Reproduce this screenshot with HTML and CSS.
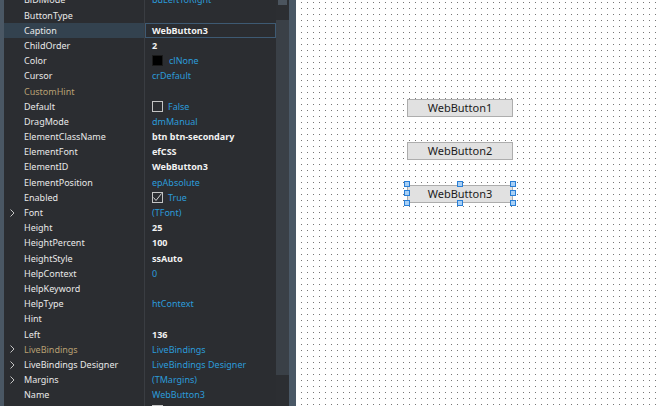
FILE: index.html
```html
<!DOCTYPE html>
<html>
<head>
<meta charset="utf-8">
<link rel="stylesheet" href="styles.css">
</head>
<body>
<div class="app">
  <div class="inspector">
    <div class="gutter"></div>
    <div class="props">
      <div class="row"><div class="name"><span class="slot"></span>BiDiMode</div><div class="val def">bdLeftToRight</div></div>
      <div class="row"><div class="name"><span class="slot"></span>ButtonType</div><div class="val"></div></div>
      <div class="row sel"><div class="name"><span class="slot"></span>Caption</div><div class="val mod">WebButton3</div></div>
      <div class="row"><div class="name"><span class="slot"></span>ChildOrder</div><div class="val mod">2</div></div>
      <div class="row"><div class="name"><span class="slot"></span>Color</div><div class="val def"><span class="swatch"></span>clNone</div></div>
      <div class="row"><div class="name"><span class="slot"></span>Cursor</div><div class="val def">crDefault</div></div>
      <div class="row"><div class="name tan"><span class="slot"></span>CustomHint</div><div class="val"></div></div>
      <div class="row"><div class="name"><span class="slot"></span>Default</div><div class="val def"><span class="check"></span>False</div></div>
      <div class="row"><div class="name"><span class="slot"></span>DragMode</div><div class="val def">dmManual</div></div>
      <div class="row"><div class="name"><span class="slot"></span>ElementClassName</div><div class="val mod">btn btn-secondary</div></div>
      <div class="row"><div class="name"><span class="slot"></span>ElementFont</div><div class="val mod">efCSS</div></div>
      <div class="row"><div class="name"><span class="slot"></span>ElementID</div><div class="val mod">WebButton3</div></div>
      <div class="row"><div class="name"><span class="slot"></span>ElementPosition</div><div class="val def">epAbsolute</div></div>
      <div class="row"><div class="name"><span class="slot"></span>Enabled</div><div class="val def"><span class="check"><svg width="11" height="11" viewBox="0 0 11 11"><polyline points="1.5,5.5 4,8.5 9.5,1.5" fill="none" stroke="#d0d0d0" stroke-width="1"/></svg></span>True</div></div>
      <div class="row"><div class="name"><span class="slot"><svg class="chev" width="5" height="8" viewBox="0 0 5 8"><polyline points="0.5,0.5 4,4 0.5,7.5" fill="none" stroke="#c4c4c4" stroke-width="1"/></svg></span>Font</div><div class="val def">(TFont)</div></div>
      <div class="row"><div class="name"><span class="slot"></span>Height</div><div class="val mod">25</div></div>
      <div class="row"><div class="name"><span class="slot"></span>HeightPercent</div><div class="val mod">100</div></div>
      <div class="row"><div class="name"><span class="slot"></span>HeightStyle</div><div class="val mod">ssAuto</div></div>
      <div class="row"><div class="name"><span class="slot"></span>HelpContext</div><div class="val def">0</div></div>
      <div class="row"><div class="name"><span class="slot"></span>HelpKeyword</div><div class="val"></div></div>
      <div class="row"><div class="name"><span class="slot"></span>HelpType</div><div class="val def">htContext</div></div>
      <div class="row"><div class="name"><span class="slot"></span>Hint</div><div class="val"></div></div>
      <div class="row"><div class="name"><span class="slot"></span>Left</div><div class="val mod">136</div></div>
      <div class="row"><div class="name tan"><span class="slot"><svg class="chev" width="5" height="8" viewBox="0 0 5 8"><polyline points="0.5,0.5 4,4 0.5,7.5" fill="none" stroke="#c4c4c4" stroke-width="1"/></svg></span>LiveBindings</div><div class="val def">LiveBindings</div></div>
      <div class="row"><div class="name"><span class="slot"><svg class="chev" width="5" height="8" viewBox="0 0 5 8"><polyline points="0.5,0.5 4,4 0.5,7.5" fill="none" stroke="#c4c4c4" stroke-width="1"/></svg></span>LiveBindings Designer</div><div class="val def">LiveBindings Designer</div></div>
      <div class="row"><div class="name"><span class="slot"><svg class="chev" width="5" height="8" viewBox="0 0 5 8"><polyline points="0.5,0.5 4,4 0.5,7.5" fill="none" stroke="#c4c4c4" stroke-width="1"/></svg></span>Margins</div><div class="val def">(TMargins)</div></div>
      <div class="row"><div class="name"><span class="slot"></span>Name</div><div class="val def">WebButton3</div></div>
      <div class="row"><div class="name"><span class="slot"></span>ParentFont</div><div class="val def"><span class="check"></span>False</div></div>
    </div>
  </div>
  <div class="vscroll">
    <div class="arrow"></div>
    <div class="thumb"></div>
  </div>
  <div class="splitter"></div>
  <div class="canvas">
    <div class="btn b1">WebButton1</div>
    <div class="btn b2">WebButton2</div>
    <div class="btn b3">WebButton3</div>
    <div class="selframe">
      <span class="h" style="left:0%;top:0%"></span>
      <span class="h" style="left:50%;top:0%"></span>
      <span class="h" style="left:100%;top:0%"></span>
      <span class="h" style="left:0%;top:50%"></span>
      <span class="h" style="left:100%;top:50%"></span>
      <span class="h" style="left:0%;top:100%"></span>
      <span class="h" style="left:50%;top:100%"></span>
      <span class="h" style="left:100%;top:100%"></span>
    </div>
  </div>
</div>
</body>
</html>
```

FILE: styles.css
```css
* { box-sizing: border-box; }
html, body { margin: 0; padding: 0; }
body {
  width: 660px;
  height: 406px;
  overflow: hidden;
  background: #2b2d31;
  font-family: "Noto Sans", "DejaVu Sans", sans-serif;
}
.app {
  display: flex;
  width: 660px;
  height: 406px;
  overflow: hidden;
}
.inspector {
  width: 276px;
  flex: none;
  display: flex;
  background: #2b2d31;
  overflow: hidden;
}
.gutter {
  width: 4px;
  flex: none;
  background: #4a5764;
}
.props {
  flex: 1;
  margin-top: -7.6px;
}
.row {
  display: grid;
  grid-template-columns: 141px 1fr;
  height: 15.2px;
  line-height: 15.2px;
  font-size: 9px;
}
.name {
  display: flex;
  align-items: center;
  color: #e8e8e8;
  border-right: 1px solid #3a3d42;
  white-space: nowrap;
  overflow: hidden;
}
.name.tan { color: #b8a073; }
.slot {
  width: 20px;
  flex: none;
  display: flex;
  align-items: center;
  padding-left: 6px;
}
.chev { display: block; }
.val {
  display: flex;
  align-items: center;
  gap: 6px;
  padding-left: 7px;
  white-space: nowrap;
  overflow: hidden;
}
.val.def { color: #2b9bd9; }
.val.mod { color: #f2f2f2; font-weight: 700; }
.row.sel .name { background: #33424f; }
.row.sel .val { box-shadow: inset 0 0 0 1px #3e5a73; }
.swatch {
  width: 11px;
  height: 11px;
  background: #000;
  border: 1px solid #1a1a1a;
  flex: none;
}
.check {
  width: 11px;
  height: 11px;
  border: 1px solid #c4c4c4;
  flex: none;
  display: flex;
  align-items: center;
  justify-content: center;
  margin-right: -1px;
}
.check svg { display: block; margin: -1px; }
.vscroll {
  width: 13px;
  flex: none;
  background: #2c2e32;
  display: flex;
  flex-direction: column;
}
.arrow {
  height: 5px;
  margin: 0 2px;
  background: #4b545e;
}
.thumb {
  margin-top: 15px;
  height: 355px;
  background: #3a4047;
}
.splitter {
  width: 7px;
  flex: none;
  background: #4a5866;
}
.canvas {
  flex: 1;
  position: relative;
  background-color: #767676;
  background-image:
    linear-gradient(to right, #ffffff 5px, transparent 5px),
    linear-gradient(to bottom, #ffffff 5px, transparent 5px);
  background-size: 6px 6px, 6px 6px;
  background-position: 0 -3px, 0 -3px;
}
.btn {
  position: absolute;
  left: 111px;
  width: 106px;
  height: 18px;
  background: #e1e1e1;
  border: 1px solid #adadad;
  color: #1b1b1b;
  font-family: "Noto Sans", "DejaVu Sans", sans-serif;
  font-size: 11px;
  line-height: 16px;
  text-align: center;
}
.b1 { top: 99px; }
.b2 { top: 142px; }
.b3 { top: 185px; }
.selframe {
  position: absolute;
  left: 110.5px;
  top: 183.5px;
  width: 106px;
  height: 19px;
}
.h {
  position: absolute;
  width: 6px;
  height: 6px;
  transform: translate(-50%, -50%);
  background: #a9d0f5;
  border: 1px solid #2a7fd6;
}
```
